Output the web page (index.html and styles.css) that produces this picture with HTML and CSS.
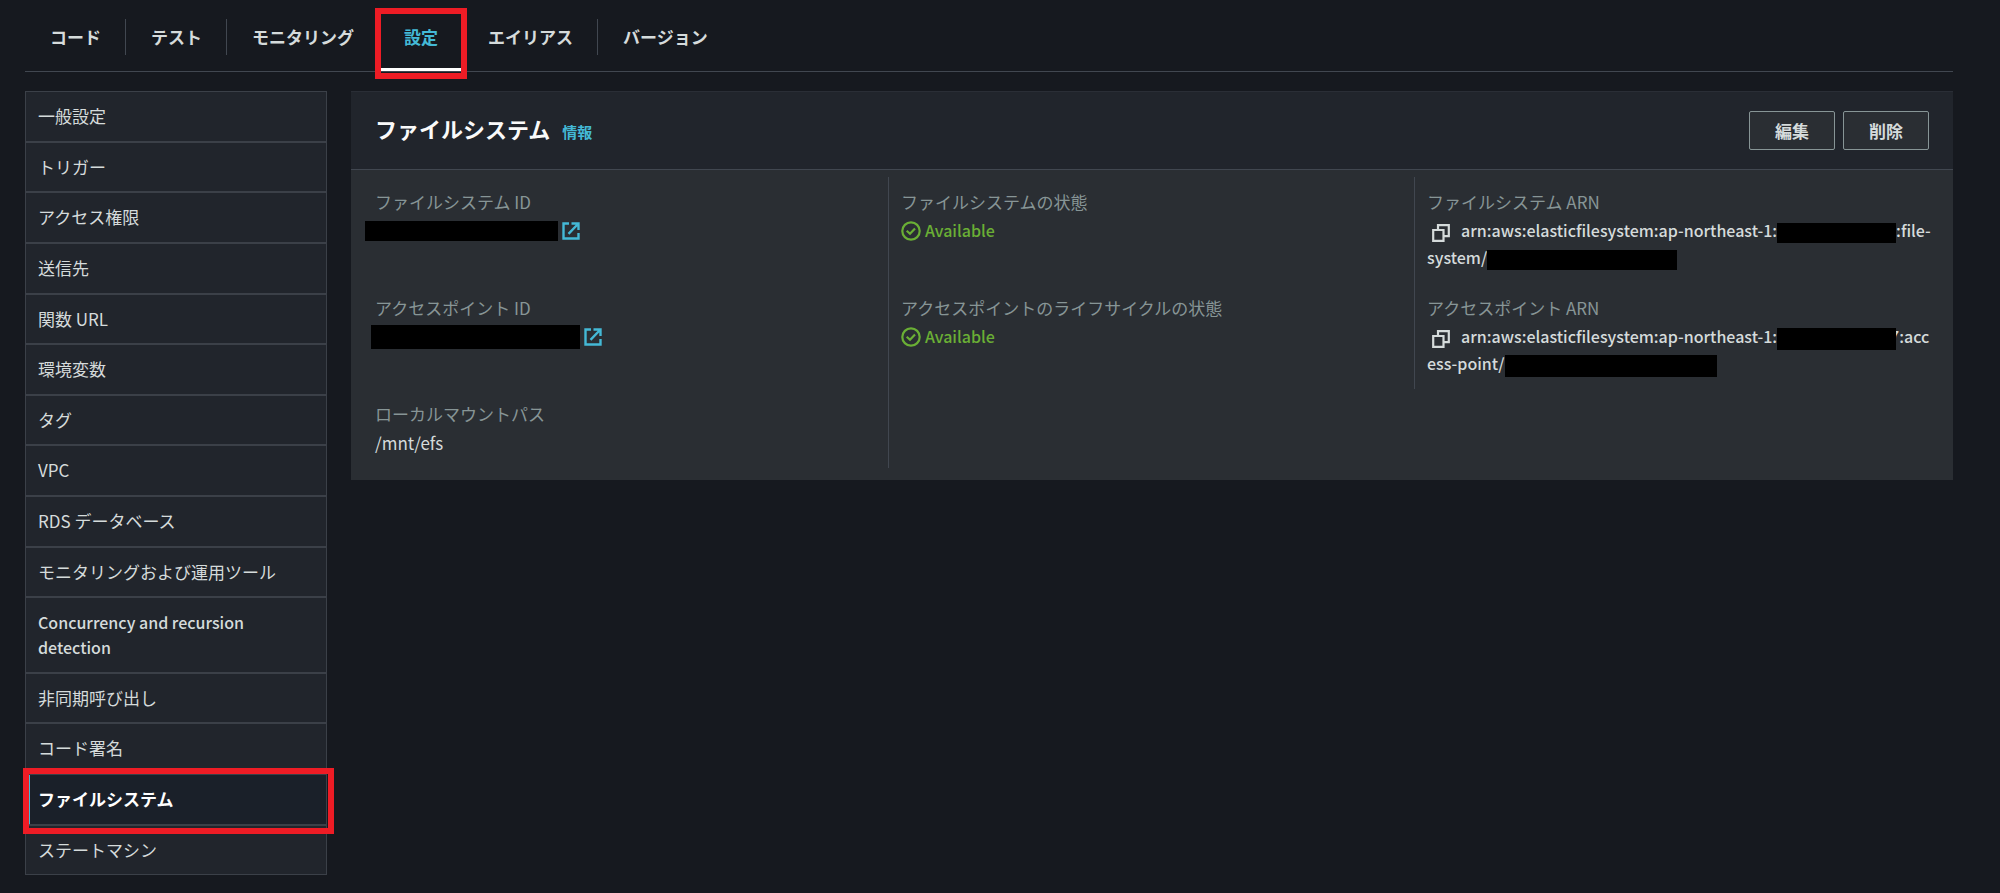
FILE: index.html
```html
<!DOCTYPE html>
<html lang="ja">
<head>
<meta charset="utf-8">
<title>ファイルシステム - 設定</title>
<link rel="stylesheet" href="styles.css">
</head>
<body>
<svg class="sprite" aria-hidden="true">
  <symbol id="external" viewBox="0 0 18 18">
    <path d="M7 1.500H1.500v15h15V11M9.500 1.500h7V8M6.500 11.800l9.500-9.800" fill="none" stroke="currentColor" stroke-width="2.400"/>
  </symbol>
  <symbol id="check" viewBox="0 0 20 20">
    <circle cx="10" cy="10" r="8.700" fill="none" stroke="currentColor" stroke-width="2.200"/>
    <path d="M5.700 9.700l3.300 3 5-5.200" fill="none" stroke="currentColor" stroke-width="2.200"/>
  </symbol>
  <symbol id="copy" viewBox="0 0 18 18">
    <path d="M1.200 6h10.300v10.800H1.200zM6 5.500V1.200h10.800v11H12" fill="none" stroke="currentColor" stroke-width="2.200"/>
  </symbol>
</svg>

<nav class="tabs" aria-label="関数">
  <a class="tab" href="#code">コード</a>
  <a class="tab" href="#test">テスト</a>
  <a class="tab" href="#monitoring">モニタリング</a>
  <a class="tab tab-active" href="#settings" aria-current="page">設定</a>
  <a class="tab" href="#aliases">エイリアス</a>
  <a class="tab" href="#versions">バージョン</a>
</nav>

<div class="layout">
  <nav class="side" aria-label="設定">
    <a class="side-item" href="#general">一般設定</a>
    <a class="side-item" href="#triggers">トリガー</a>
    <a class="side-item" href="#permissions">アクセス権限</a>
    <a class="side-item" href="#destinations">送信先</a>
    <a class="side-item" href="#url">関数 URL</a>
    <a class="side-item" href="#env">環境変数</a>
    <a class="side-item" href="#tags">タグ</a>
    <a class="side-item" href="#vpc">VPC</a>
    <a class="side-item" href="#rds">RDS データベース</a>
    <a class="side-item" href="#tools">モニタリングおよび運用ツール</a>
    <a class="side-item" href="#concurrency"><span class="latin">Concurrency and recursion detection</span></a>
    <a class="side-item" href="#async">非同期呼び出し</a>
    <a class="side-item" href="#signing">コード署名</a>
    <a class="side-item side-active" href="#filesystem" aria-current="page">ファイルシステム</a>
    <a class="side-item" href="#statemachines">ステートマシン</a>
  </nav>

  <main class="panel">
    <header class="panel-head">
      <div class="heading">
        <h1 class="title">ファイルシステム</h1>
        <a class="info" href="#info">情報</a>
      </div>
      <div class="actions">
        <button class="button" type="button">編集</button>
        <button class="button" type="button">削除</button>
      </div>
    </header>
    <dl class="details">
      <div class="cell ruled">
        <dt>ファイルシステム ID</dt>
        <dd><a class="resource" href="#fs"><span class="mask mask-fs-id"></span><svg class="icon"><use href="#external"/></svg></a></dd>
      </div>
      <div class="cell ruled">
        <dt>ファイルシステムの状態</dt>
        <dd class="status latin"><svg class="icon-check"><use href="#check"/></svg>Available</dd>
      </div>
      <div class="cell">
        <dt>ファイルシステム ARN</dt>
        <dd class="latin"><button class="copy" type="button" aria-label="コピー"><svg class="icon"><use href="#copy"/></svg></button>arn:aws:elasticfilesystem:ap-northeast-1:<span class="mask mask-account"></span>:file-<br>system/<span class="mask mask-fs"></span></dd>
      </div>
      <div class="cell ruled">
        <dt>アクセスポイント ID</dt>
        <dd><a class="resource" href="#ap"><span class="mask mask-ap-id"></span><svg class="icon"><use href="#external"/></svg></a></dd>
      </div>
      <div class="cell ruled">
        <dt>アクセスポイントのライフサイクルの状態</dt>
        <dd class="status latin"><svg class="icon-check"><use href="#check"/></svg>Available</dd>
      </div>
      <div class="cell">
        <dt>アクセスポイント ARN</dt>
        <dd class="latin"><button class="copy" type="button" aria-label="コピー"><svg class="icon"><use href="#copy"/></svg></button>arn:aws:elasticfilesystem:ap-northeast-1:<span class="mask mask-account mask-over"></span>7:acc<br>ess-point/<span class="mask mask-ap"></span></dd>
      </div>
      <div class="cell ruled">
        <dt>ローカルマウントパス</dt>
        <dd>/mnt/efs</dd>
      </div>
    </dl>
  </main>
</div>
</body>
</html>
```
FILE: styles.css
```css
* { box-sizing: border-box; }

body {
  margin: 0;
  padding: 0 47px 17px 25px;
  background: #16191f;
  color: #d5dbdb;
  font: 17px/1.45 "Noto Sans CJK JP", sans-serif;
}

a { color: inherit; text-decoration: none; }

.latin { font-size: 16px; font-weight: 500; }

.sprite { display: none; }

.tabs {
  display: flex;
  align-items: flex-start;
  height: 72px;
  padding-top: 19px;
  border-bottom: 1px solid #414750;
}

.tab {
  position: relative;
  padding: 0 25px;
  line-height: 36px;
  font-weight: 700;
}

.tab + .tab { border-left: 1px solid #414750; margin-left: -1px; }
.tab-active,
.tab-active + .tab { border-left-color: transparent !important; }

.tab-active {
  height: 52px;
  border-bottom: 3px solid #fff;
  color: #44b9d6;
}

.tab-active::after {
  content: "";
  position: absolute;
  inset: -11px -4px -11px -4px;
  border: 6px solid #ee1c25;
}

.layout {
  display: grid;
  grid-template-columns: 302px 1fr;
  gap: 24px;
  align-items: start;
  padding-top: 19px;
}

.side { border: 1px solid #3b4048; }

.side-item {
  display: block;
  position: relative;
  padding: 12px;
  background: #21252c;
  border-bottom: 2px solid #3b4048;
}

.side-item:last-child { border-bottom: 0; }

.side-active {
  padding-left: 8px;
  background: #1a2029;
  border-left: 4px solid #44b9d6;
  color: #fff;
  font-weight: 700;
}

.side-active::after {
  content: "";
  position: absolute;
  z-index: 1;
  inset: -7px -8px -10px -7px;
  border: 6px solid #ee1c25;
}

.panel {
  background: #2a2e33;
  border-top: 1px solid #2a2e36;
}

.panel-head {
  display: flex;
  align-items: flex-start;
  padding: 19px 24px;
  background: #21252c;
  border-bottom: 1px solid #414750;
}

.heading { display: flex; align-items: baseline; gap: 12px; }

.title {
  margin: 0;
  color: #fafafa;
  font-size: 22px;
  line-height: 34px;
}

.info {
  color: #44b9d6;
  font-size: 15px;
  font-weight: 700;
}

.actions { display: flex; gap: 8px; margin-left: auto; }

.button {
  padding: 0 25px;
  background: #2a2e33;
  border: 1px solid #879596;
  border-radius: 2px;
  color: inherit;
  font: inherit;
  font-weight: 700;
  line-height: 37px;
}

.details {
  display: grid;
  grid-template-columns: repeat(3, minmax(0, 1fr));
  margin: 0;
  padding: 7px 12px 12px;
}

.cell {
  padding: 12px 12px 12px;
  border-right: 1px solid transparent;
}

.ruled { border-right-color: #414750; }

dt { color: #879596; line-height: 26px; }

dd { margin: 2px 0 0; line-height: 27px; white-space: nowrap; }

.resource { display: flex; align-items: center; gap: 4px; height: 27px; color: #44b9d6; }

.icon { width: 18px; height: 18px; }

/* Negative vertical margins keep the bars from stretching their line. */
.mask { display: inline-block; height: 20px; margin: -4px 0; background: #000; vertical-align: middle; }
.mask-fs { width: 190px; }
.mask-fs-id { width: 193px; margin-left: -10px; }
.mask-ap { width: 212px; height: 22px; }
.mask-ap-id { width: 209px; height: 24px; margin-left: -4px; }
.mask-account { width: 119px; }
.mask-over { position: relative; height: 22px; margin-right: -6px; }

.status { display: flex; align-items: center; gap: 4px; color: #6aaf35; }
.icon-check { width: 20px; height: 20px; }

.copy {
  display: inline-flex;
  margin: -4px 11px -4px 5px;
  padding: 0;
  background: none;
  border: 0;
  color: inherit;
  vertical-align: middle;
}
```
